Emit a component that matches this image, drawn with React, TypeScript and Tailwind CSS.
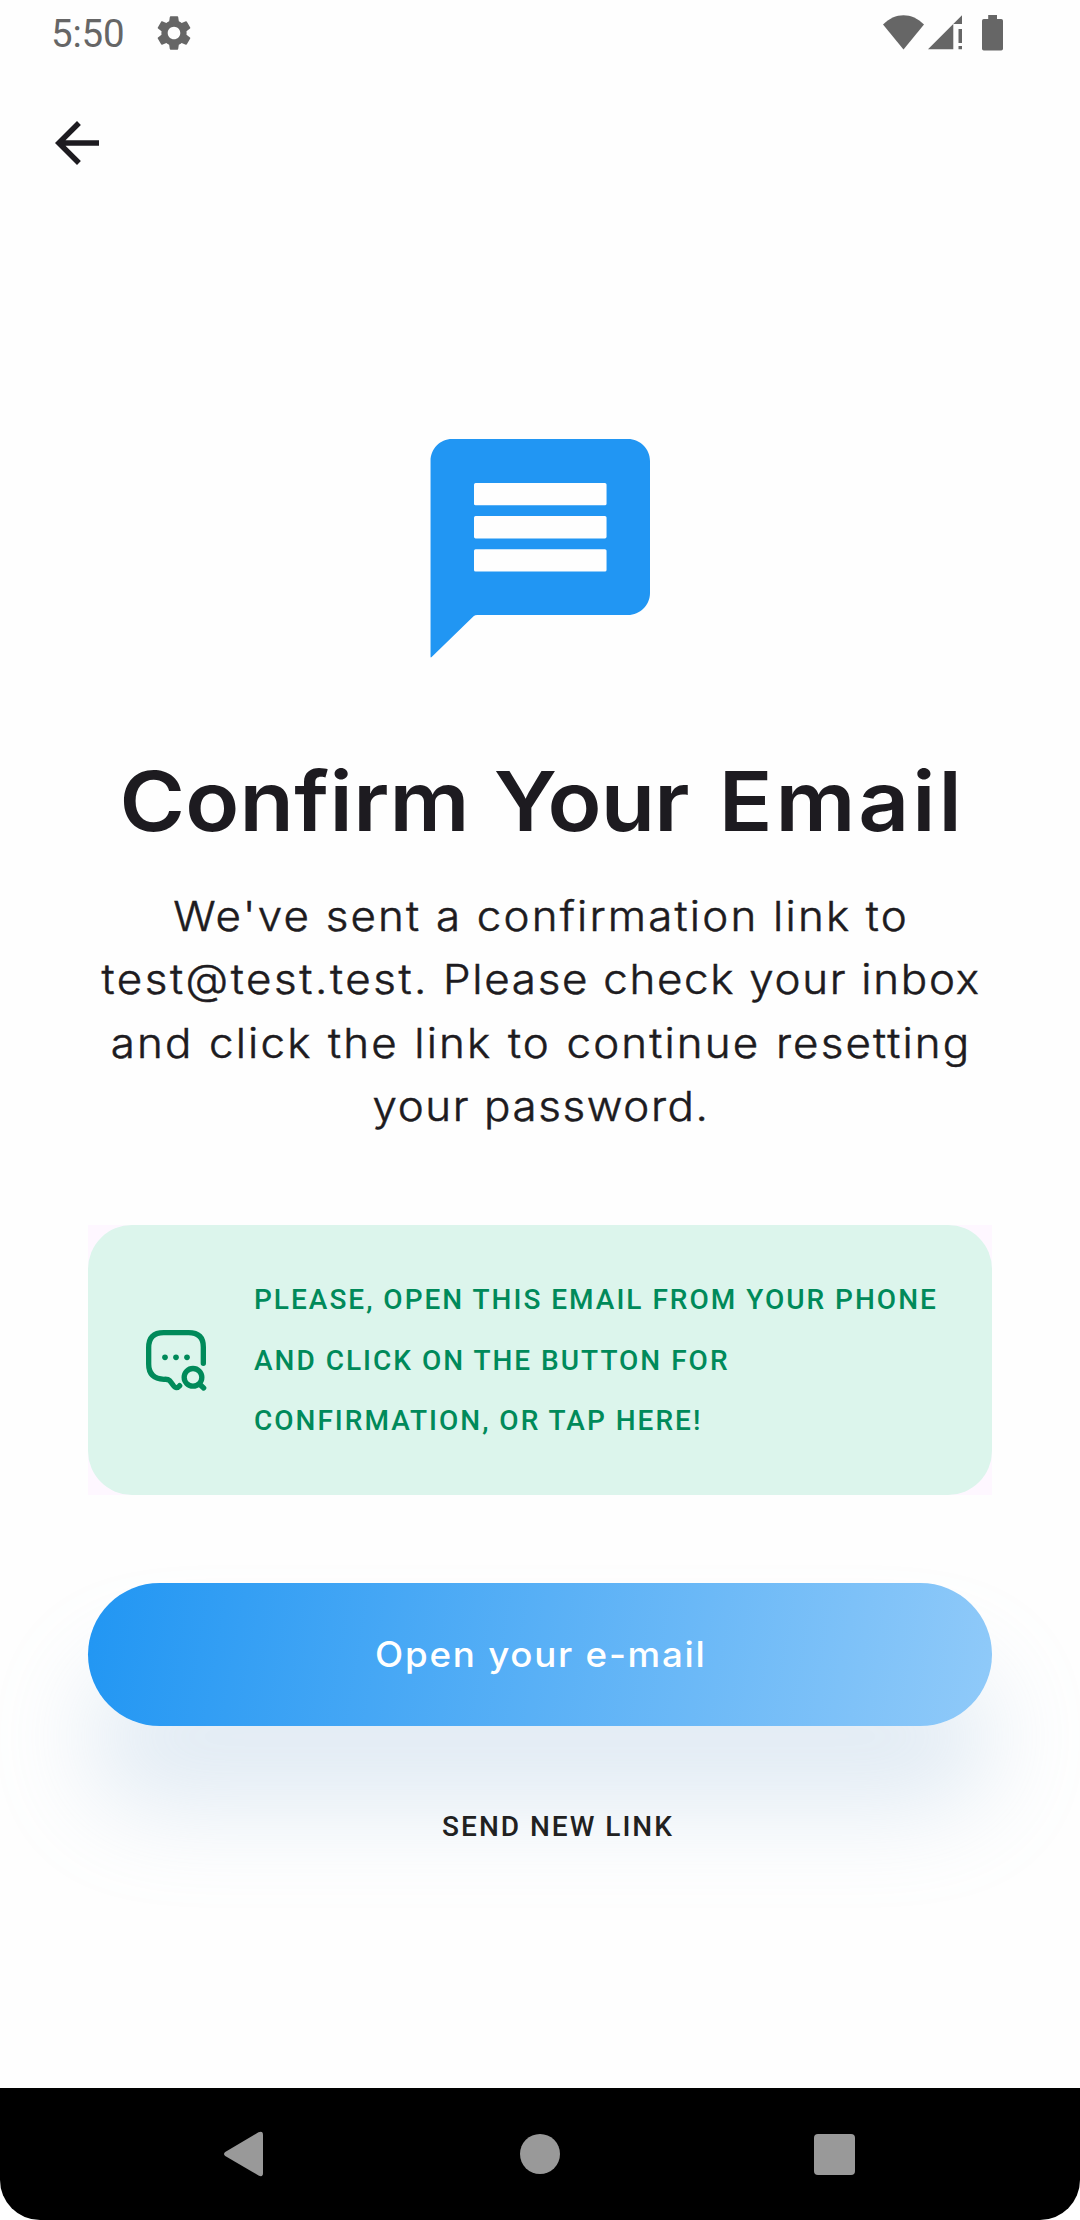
import React from "react";

function StatusBar() {
  return (
    <div className="flex h-[66px] items-start justify-between pt-[11px] pr-[77px] pl-[51px] text-[#666666]">
      <div className="flex items-start">
        <span className="w-[102px] font-[Roboto,sans-serif] text-[38.5px] leading-[46px] tracking-[-0.2px]">5:50</span>
        <svg className="mt-[1px] h-[42px] w-[42px]" viewBox="0 0 24 24" fill="currentColor">
          <path d="M19.14 12.94c.04-.3.06-.61.06-.94 0-.32-.02-.64-.07-.94l2.03-1.58a.49.49 0 0 0 .12-.61l-1.92-3.32a.488.488 0 0 0-.59-.22l-2.39.96c-.5-.38-1.03-.7-1.62-.94l-.36-2.54a.484.484 0 0 0-.48-.41h-3.84c-.24 0-.43.17-.47.41l-.36 2.54c-.59.24-1.13.57-1.62.94l-2.39-.96c-.22-.08-.47 0-.59.22L2.74 8.87c-.12.21-.08.47.12.61l2.03 1.58c-.05.3-.09.63-.09.94s.02.64.07.94l-2.03 1.58a.49.49 0 0 0-.12.61l1.92 3.32c.12.22.37.29.59.22l2.39-.96c.5.38 1.03.7 1.62.94l.36 2.54c.05.24.24.41.48.41h3.84c.24 0 .44-.17.47-.41l.36-2.54c.59-.24 1.13-.56 1.62-.94l2.39.96c.22.08.47 0 .59-.22l1.92-3.32c.12-.22.07-.47-.12-.61l-2.01-1.58zM12 15.6c-1.98 0-3.6-1.62-3.6-3.6s1.62-3.6 3.6-3.6 3.6 1.62 3.6 3.6-1.62 3.6-3.6 3.6z" />
        </svg>
      </div>
      <div className="mt-[4px] flex">
        <svg className="h-9 w-[41px]" viewBox="0 0 41 36" fill="currentColor">
          <path d="M0 9.5C12-3 29-3 41 9.5L20.5 34.500z" />
        </svg>
        <svg className="ml-[4px] h-9 w-[35px]" viewBox="0 0 35 36" fill="currentColor">
          <path d="M0 34.300L34 .3V9H25.300V34.300zM30.500 14h3.500v14h-3.500zM30.500 31h3.500v3.300h-3.500z" />
        </svg>
        <svg className="ml-[19px] h-9 w-[21px]" viewBox="0 0 21 36" fill="currentColor">
          <path d="M6.200 0h8.800v4h4.200a1.800 1.800 0 0 1 1.800 1.800v28a1.800 1.800 0 0 1-1.800 1.800H1.800a1.800 1.800 0 0 1-1.800-1.800v-28A1.800 1.800 0 0 1 1.800 4h4.400z" />
        </svg>
      </div>
    </div>
  );
}

function MessageIcon() {
  return (
    <svg className="mx-auto h-[264px] w-[264px]" viewBox="0 0 24 24">
      <path fill="#2196f3" d="M4 2h16c1.100 0 2 .9 2 2v12c0 1.100-.9 2-2 2H6.300q-.2 0-.34.120L2.150 21.820q-.1.100-.1-.05L2.050 4c0-1.100.85-2 1.950-2z" />
      <g fill="#fefefe">
        <rect x="6" y="6" width="12.050" height="2.030" rx=".15" />
        <rect x="6" y="9.010" width="12.050" height="2.030" rx=".15" />
        <rect x="6" y="12.020" width="12.050" height="2.030" rx=".15" />
      </g>
    </svg>
  );
}

function ChatSearchIcon() {
  return (
    <svg className="h-[66px] w-[66px] shrink-0" viewBox="39 51 198 198" fill="none" stroke="#008a5a" strokeWidth="16" strokeLinecap="round" strokeLinejoin="round">
      <path d="M220 160V111Q220 68 176 68H101Q56 68 56 113V162Q56 206 102 208Q114 207 119 212Q124 218 129 225Q138 240 149 227" />
      <circle cx="189" cy="202" r="26.500" />
      <path d="M209 223L221 234" />
      <g fill="#008a5a" stroke="none">
        <circle cx="105" cy="142" r="8.500" />
        <circle cx="138" cy="142" r="8.500" />
        <circle cx="171" cy="142" r="8.500" />
      </g>
    </svg>
  );
}

function NavigationBar() {
  return (
    <div className="bg-white">
      <div className="flex h-[132px] items-center rounded-b-[40px] bg-black pl-[224px] text-[#999999]">
        <svg className="h-[46px] w-[40px]" viewBox="0 0 40 46" fill="currentColor">
          <path d="M1.200 21L34.500 1.200Q39 -.6 39 4V42Q39 46.600 34.500 44.500L1.200 25Q-1.200 23 1.200 21z" />
        </svg>
        <span className="ml-[256px] h-10 w-10 rounded-full bg-[#999999]" />
        <span className="mt-[1px] ml-[254px] h-[41px] w-[41px] rounded-[4px] bg-[#999999]" />
      </div>
    </div>
  );
}

export default function App() {
  return (
    <div className="flex h-[2220px] w-[1080px] flex-col overflow-hidden bg-[#fefefe] font-[Inter,sans-serif] text-[#1d1b20]">
      <StatusBar />
      <header className="flex h-[154px] items-center pl-11">
        <button aria-label="Back">
          <svg className="h-[66px] w-[66px]" viewBox="0 0 24 24" fill="currentColor">
            <path d="M20 11H7.830l5.590-5.590L12 4l-8 8 8 8 1.410-1.410L7.830 13H20v-2z" />
          </svg>
        </button>
      </header>

      <main className="flex grow flex-col px-[88px] pt-[197px]">
        <MessageIcon />

        <h1 className="mt-[70px] scale-x-107 pl-[4px] text-center text-[83px] leading-[100px] font-semibold whitespace-nowrap">
          <span className="tracking-[0.300px]">Confirm </span>
          <span className="ml-[1px] tracking-[-0.800px]">Your </span>
          <span className="ml-[8px] tracking-[2.800px]">Email</span>
        </h1>

        <p className="mt-[34px] flex scale-x-107 flex-col items-center pl-[2px] text-[41px] leading-[63.250px] font-light whitespace-nowrap [-webkit-text-stroke:0.5px_#1d1b20]">
          <span className="tracking-[2.050px]">We've sent a confirmation link to</span>
          <span className="tracking-[1.600px]">
            <span className="tracking-[2.400px]">test@test.test.</span> Please check your inbox
          </span>
          <span className="tracking-[2px] [word-spacing:1px]">and click the link to continue resetting</span>
          <span className="tracking-[1.500px]">your password.</span>
        </p>

        <section className="mt-[87px] bg-[#fef7ff]">
          <div className="flex h-[270px] items-center rounded-[44px] bg-[#dcf5ec] pl-[55px]">
            <ChatSearchIcon />
            <p className="mt-[2px] ml-[45px] font-[Roboto,sans-serif] text-[28px] leading-[60.500px] font-medium tracking-[2px] whitespace-nowrap text-[#008a5a]">
              PLEASE, OPEN THIS EMAIL FROM YOUR PHONE
              <br />
              AND CLICK ON THE BUTTON FOR
              <br />
              CONFIRMATION, OR TAP HERE!
            </p>
          </div>
        </section>

        <button className="mt-[88px] h-[143px] shrink-0 rounded-full bg-linear-[100deg,#2196f3,#90caf9] pl-[2px] text-[35px] font-medium tracking-[1.650px] text-white shadow-[0_82px_96px_rgba(150,187,218,0.28)]">
          <span className="inline-block scale-x-105">Open your e-mail</span>
        </button>
        <button className="mt-[81px] ml-[36px] self-center font-[Roboto,sans-serif] text-[28px] leading-10 font-medium tracking-[2px] text-[#212121]">
          SEND NEW LINK
        </button>
      </main>
      <NavigationBar />
    </div>
  );
}
